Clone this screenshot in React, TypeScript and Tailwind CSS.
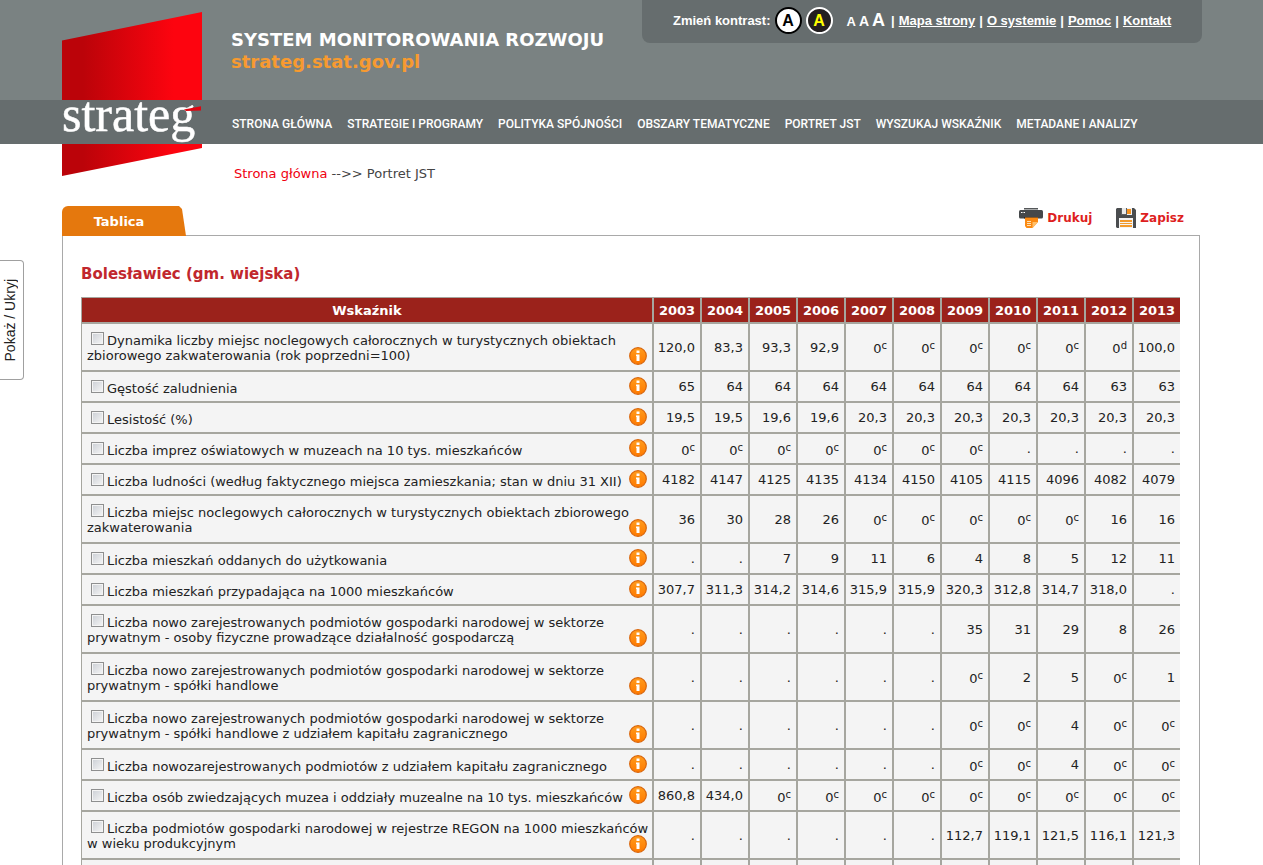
import React from 'react';

const YEARS = [2003, 2004, 2005, 2006, 2007, 2008, 2009, 2010, 2011, 2012, 2013];

const NAV = [
  'STRONA GŁÓWNA',
  'STRATEGIE I PROGRAMY',
  'POLITYKA SPÓJNOŚCI',
  'OBSZARY TEMATYCZNE',
  'PORTRET JST',
  'WYSZUKAJ WSKAŹNIK',
  'METADANE I ANALIZY',
];

const TOP_LINKS = ['Mapa strony', 'O systemie', 'Pomoc', 'Kontakt'];

interface Indicator {
  lines: string[];
  values: string;
}

// Values are separated by spaces, a trailing letter is a footnote mark
const INDICATORS: Indicator[] = [
  {
    lines: ['Dynamika liczby miejsc noclegowych całorocznych w turystycznych obiektach', 'zbiorowego zakwaterowania (rok poprzedni=100)'],
    values: '120,0 83,3 93,3 92,9 0c 0c 0c 0c 0c 0d 100,0',
  },
  { lines: ['Gęstość zaludnienia'], values: '65 64 64 64 64 64 64 64 64 63 63' },
  { lines: ['Lesistość (%)'], values: '19,5 19,5 19,6 19,6 20,3 20,3 20,3 20,3 20,3 20,3 20,3' },
  { lines: ['Liczba imprez oświatowych w muzeach na 10 tys. mieszkańców'], values: '0c 0c 0c 0c 0c 0c 0c . . . .' },
  {
    lines: ['Liczba ludności (według faktycznego miejsca zamieszkania; stan w dniu 31 XII)'],
    values: '4182 4147 4125 4135 4134 4150 4105 4115 4096 4082 4079',
  },
  {
    lines: ['Liczba miejsc noclegowych całorocznych w turystycznych obiektach zbiorowego', 'zakwaterowania'],
    values: '36 30 28 26 0c 0c 0c 0c 0c 16 16',
  },
  { lines: ['Liczba mieszkań oddanych do użytkowania'], values: '. . 7 9 11 6 4 8 5 12 11' },
  {
    lines: ['Liczba mieszkań przypadająca na 1000 mieszkańców'],
    values: '307,7 311,3 314,2 314,6 315,9 315,9 320,3 312,8 314,7 318,0 .',
  },
  {
    lines: ['Liczba nowo zarejestrowanych podmiotów gospodarki narodowej w sektorze', 'prywatnym - osoby fizyczne prowadzące działalność gospodarczą'],
    values: '. . . . . . 35 31 29 8 26',
  },
  {
    lines: ['Liczba nowo zarejestrowanych podmiotów gospodarki narodowej w sektorze', 'prywatnym - spółki handlowe'],
    values: '. . . . . . 0c 2 5 0c 1',
  },
  {
    lines: ['Liczba nowo zarejestrowanych podmiotów gospodarki narodowej w sektorze', 'prywatnym - spółki handlowe z udziałem kapitału zagranicznego'],
    values: '. . . . . . 0c 0c 4 0c 0c',
  },
  {
    lines: ['Liczba nowozarejestrowanych podmiotów z udziałem kapitału zagranicznego'],
    values: '. . . . . . 0c 0c 4 0c 0c',
  },
  {
    lines: ['Liczba osób zwiedzających muzea i oddziały muzealne na 10 tys. mieszkańców'],
    values: '860,8 434,0 0c 0c 0c 0c 0c 0c 0c 0c 0c',
  },
  {
    lines: ['Liczba podmiotów gospodarki narodowej w rejestrze REGON na 1000 mieszkańców', 'w wieku produkcyjnym'],
    values: '. . . . . . 112,7 119,1 121,5 116,1 121,3',
  },
];

const Logo: React.FC = () => (
  <svg className="absolute left-[62px] top-3" width="140" height="164" viewBox="0 0 140 164" role="img" aria-label="strateg">
    <defs>
      <linearGradient id="logoRed" gradientUnits="userSpaceOnUse" x1="0" x2="140" y1="0" y2="0">
        <stop offset="0.15" stopColor="#bb0309" />
        <stop offset="0.8" stopColor="#fd040f" />
      </linearGradient>
    </defs>
    <path d="M0 28.5 140 0V136L0 164Z" fill="url(#logoRed)" />
    <rect y="88" width="140" height="44" fill="#666d6e" />
    <text x="0" y="119" fontSize="50" fill="#fff" stroke="#fff" strokeWidth="0.5" className="font-['Liberation_Serif',serif]">strateg</text>
    <path d="M122 97.5 139 94.3V98.5L124 99Z" fill="#e00410" />
  </svg>
);

const InfoIcon: React.FC = () => (
  <svg width="18" height="18" viewBox="0 0 18 18" aria-hidden="true">
    <defs>
      <linearGradient id="infoFill" x1="0" x2="0" y1="0" y2="1">
        <stop offset="0" stopColor="#ff9b1c" />
        <stop offset="1" stopColor="#ff7a00" />
      </linearGradient>
    </defs>
    <circle cx="9" cy="9" r="8.3" fill="url(#infoFill)" stroke="#d9650a" strokeWidth="1.2" />
    <path d="M7.5 3.5h3V6h-3zM7 7.5h3.5V14h-3V9H7z" fill="#fff" />
  </svg>
);

const PrinterIcon: React.FC = () => (
  <svg width="24" height="20" viewBox="0 0 24 20" aria-hidden="true">
    <path d="M5 0h14v1.5H5z" fill="#55585a" />
    <rect y="2" width="24" height="8.5" rx="1.5" fill="#45484a" />
    <path d="M2 4h1.5v1H2zM4.5 4H6v1H4.500z" fill="#fff" />
    <path d="M5 9h14v1.5H5z" fill="#26282a" />
    <path d="M6 9.5h13V14l-5.500 6H7.500L6 18z" fill="#fb8a12" />
    <path d="M8 13.5h4M8 15.5h4M8 17.5h4" stroke="#ffe1b5" />
    <path d="M13.500 14H19l-5.500 6z" fill="#ffc06b" />
  </svg>
);

const FloppyIcon: React.FC = () => (
  <svg width="20" height="20" viewBox="0 0 20 20" aria-hidden="true">
    <path d="M0 1l1-1h17l2 2v18H1l-1-1z" fill="#4a4d4f" />
    <path d="M5 0h11v7H5z" fill="#f1f1f1" />
    <path d="M5 0h6v7H5z" fill="#5d6062" />
    <path d="M6 0h4v6H6z" fill="#e9eaea" />
    <path d="M11 1h4v5h-4z" fill="#f6921e" />
    <path d="M3 10h14v10H3z" fill="#f4f4f4" />
    <path d="M4 12h12v2H4zM4 15h12v1H4zM4 17h12v2H4z" fill="#f39a2c" />
  </svg>
);

const Value: React.FC<{ value: string }> = ({ value }) => {
  const mark = /[a-z]$/.test(value) ? value.slice(-1) : '';
  if (mark) {
    return (
      <td className="border-b-2 border-l-2 border-[#a6a69f] pr-[5px] pt-[3px] text-right align-middle">
        {value.slice(0, -1)}
        <sup className="-top-1 text-[10px]">{mark}</sup>
      </td>
    );
  }
  return <td className="border-b-2 border-l-2 border-[#a6a69f] pr-[5px] text-right align-middle">{value}</td>;
};

const Header: React.FC = () => (
  <header className="relative text-white">
    <div className="flex h-[100px] items-start justify-between bg-[#7a8282] pl-[231px] pr-[61px]">
      <div className="pt-[29px] text-lg font-bold leading-[22px]">
        <div>SYSTEM MONITOROWANIA ROZWOJU</div>
        <div className="text-[#f79a30]">strateg.stat.gov.pl</div>
      </div>
      <div className="flex h-[43px] w-[560px] items-center whitespace-nowrap rounded-b-lg bg-[#666d6e] pb-0.5 pl-[31px] font-['Liberation_Sans',sans-serif] text-[13px] font-bold">
        <span>Zmień kontrast:</span>
        <button className="ml-1 flex h-[27px] w-[27px] items-center justify-center rounded-full border-2 border-black bg-white text-base leading-none text-black">A</button>
        <button className="ml-1 flex h-[27px] w-[27px] items-center justify-center rounded-full border-2 border-white bg-[#231f20] text-base leading-none text-[#ffff00]">A</button>
        <div className="ml-[14px] mr-0.5 flex items-baseline gap-[3px] leading-none">
          <button className="text-[13px]">A</button>
          <button className="text-sm">A</button>
          <button className="text-lg leading-none">A</button>
        </div>
        {TOP_LINKS.map((link) => (
          <React.Fragment key={link}>
            <span className="mx-1">|</span>
            <a href="#" className="underline">{link}</a>
          </React.Fragment>
        ))}
      </div>
    </div>
    <nav className="flex h-[44px] items-center gap-[15px] whitespace-nowrap bg-[#666d6e] pl-[232px] pt-1 font-['Roboto',sans-serif] text-xs font-medium">
      {NAV.map((item) => (
        <a key={item} href="#">{item}</a>
      ))}
    </nav>
    <Logo />
  </header>
);

const IndicatorTable: React.FC = () => (
  <table className="w-full table-fixed border-separate border-spacing-0 border-l border-t border-[#a6a69f] bg-[#f4f4f4] text-[13px] leading-[15px] text-[#222]">
    <thead>
      <tr className="h-[26px] bg-[#9b221b] text-white">
        <th className="border-b-2 border-[#a6a69f]">Wskaźnik</th>
        {YEARS.map((year) => (
          <th key={year} className="w-12 border-b-2 border-l-2 border-[#a6a69f]">{year}</th>
        ))}
      </tr>
    </thead>
    <tbody>
      {INDICATORS.map((row, i) => (
        <tr key={i} className={row.lines.length > 1 ? 'h-[48px]' : 'h-[31px]'}>
          <td className="border-b-2 border-[#a6a69f] px-[5px] align-top">
            <div className={row.lines.length > 1 ? 'flex h-[41px] items-end' : 'flex h-[23px] items-end'}>
              <label className="min-w-0 flex-1 self-start whitespace-nowrap pt-2">
                <input
                  type="checkbox"
                  className="ml-1 mr-[3px] h-[13px] w-[13px] appearance-none border border-[#8e8f8f] bg-linear-to-br from-[#cbcfd5] to-[#f6f6f6] align-baseline shadow-[inset_0_0_0_1px_#f4f4f4]"
                />
                {row.lines[0]}
                {row.lines[1] && <br />}
                {row.lines[1]}
              </label>
              <a href="#" className="shrink-0" aria-label="Informacja"><InfoIcon /></a>
            </div>
          </td>
          {row.values.split(' ').map((value, j) => (
            <Value key={j} value={value} />
          ))}
        </tr>
      ))}
      <tr className="h-[31px]">
        <td></td>
        {YEARS.map((year) => (
          <td key={year} className="border-l-2 border-[#a6a69f]"></td>
        ))}
      </tr>
    </tbody>
  </table>
);

const App: React.FC = () => {
  return (
    <div className="relative h-screen overflow-hidden bg-white font-['DejaVu_Sans',sans-serif] text-[13px]">
      <Header />
      <button className="absolute left-0 top-[260px] flex h-[120px] w-6 items-center justify-center rounded-r border border-l-0 border-[#a0a0a0] bg-white pr-1 font-['Liberation_Sans',sans-serif] text-sm text-[#222]">
        <span className="rotate-180 [writing-mode:vertical-rl]">Pokaż / Ukryj</span>
      </button>
      <main className="pl-[62px] pr-[63px]">
        <div className="h-[62px] pl-[172px] pt-5 leading-5 text-[#444]">
          <a href="#" className="text-[#f00010]">Strona główna</a> --&gt;&gt; Portret JST
        </div>
        <div className="flex items-start justify-between">
          <button className="relative -mb-px h-[30px] w-[124px] rounded-tl-md bg-[#e5780d] pr-2.5 pt-0.5 font-bold text-white [clip-path:polygon(0_0,117px_0,120px_3px,124px_100%,0_100%)]">
            Tablica
          </button>
          <div className="flex gap-6 pr-4 pt-0.5 text-xs font-bold text-[#de1f1f]">
            <button className="flex items-center gap-1"><PrinterIcon />Drukuj</button>
            <button className="flex items-center gap-1"><FloppyIcon />Zapisz</button>
          </div>
        </div>
        <section className="border border-[#a9a9a9] pl-[18px] pr-[19px]">
          <h1 className="pb-3 pt-7 text-[15px] font-bold leading-[21px] text-[#c1272d]">Bolesławiec (gm. wiejska)</h1>
          <IndicatorTable />
        </section>
      </main>
    </div>
  );
};

export default App;
